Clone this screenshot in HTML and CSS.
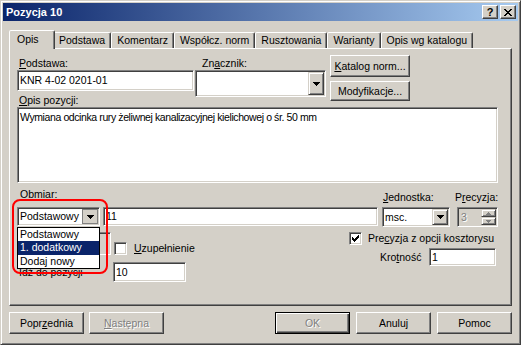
FILE: index.html
```html
<!DOCTYPE html>
<html lang="pl">
<head>
    <meta charset="UTF-8">
    <meta name="viewport" content="width=device-width, initial-scale=1.0">
    <title>Pozycja 10</title>
    <link rel="stylesheet" href="styles.css">
</head>
<body>

<div class="window">
    <div class="titlebar">
        <span class="title">Pozycja 10</span>
        <div class="caption-buttons">
            <span class="cap-btn">?</span>
            <span class="cap-btn">
                <svg width="8" height="7" viewBox="0 0 8 7" shape-rendering="crispEdges"><path d="M0 0h2v1H0zM6 0h2v1H6zM1 1h2v1H1zM5 1h2v1H5zM2 2h4v1H2zM3 3h2v1H3zM2 4h4v1H2zM1 5h2v1H1zM5 5h2v1H5zM0 6h2v1H0zM6 6h2v1H6z"/></svg>
            </span>
        </div>
    </div>

    <div class="dialog">
        <div class="tabs">
            <div class="tab active">Opis</div>
            <div class="tab">Podstawa</div>
            <div class="tab">Komentarz</div>
            <div class="tab">Współcz. norm</div>
            <div class="tab">Rusztowania</div>
            <div class="tab">Warianty</div>
            <div class="tab">Opis wg katalogu</div>
        </div>

        <div class="panel">
            <div class="row-top">
                <div class="col-podstawa">
                    <div class="label"><u>P</u>odstawa:</div>
                    <div class="sunken edit knr">KNR 4-02 0201-01</div>
                </div>
                <div class="col-znacznik">
                    <div class="label">Zn<u>a</u>cznik:</div>
                    <div class="sunken combo znacznik">
                        <span class="combo-value"></span>
                        <span class="combo-btn">
                            <svg width="7" height="4" viewBox="0 0 7 4" shape-rendering="crispEdges"><path d="M0 0h7v1H0zM1 1h5v1H1zM2 2h3v1H2zM3 3h1v1H3z"/></svg>
                        </span>
                    </div>
                </div>
                <div class="col-buttons">
                    <div class="btn katalog"><u>K</u>atalog norm...</div>
                    <div class="btn modyfikacje">Modyfikacje...</div>
                </div>
            </div>

            <div class="label"><u>O</u>pis pozycji:</div>
            <div class="sunken edit memo">Wymiana odcinka rury żeliwnej kanalizacyjnej kielichowej o śr. 50 mm</div>

            <div class="obmiar-labels">
                <div class="label obmiar-label">Obmiar:</div>
                <div class="label jm-label"><u>J</u>ednostka:</div>
                <div class="label precyzja-label">P<u>r</u>ecyzja:</div>
            </div>
            <div class="obmiar-row">
                <div class="sunken combo obmiar-combo">
                    <span class="combo-value">Podstawowy</span>
                    <span class="combo-btn pressed">
                        <svg width="7" height="4" viewBox="0 0 7 4" shape-rendering="crispEdges"><path d="M0 0h7v1H0zM1 1h5v1H1zM2 2h3v1H2zM3 3h1v1H3z"/></svg>
                    </span>
                </div>
                <div class="sunken edit ilosc">11</div>
                <div class="sunken combo jm-combo">
                    <span class="combo-value">msc.</span>
                    <span class="combo-btn">
                        <svg width="7" height="4" viewBox="0 0 7 4" shape-rendering="crispEdges"><path d="M0 0h7v1H0zM1 1h5v1H1zM2 2h3v1H2zM3 3h1v1H3z"/></svg>
                    </span>
                </div>
                <div class="sunken spin">
                    <span class="spin-value">3</span>
                    <span class="spin-btns">
                        <span class="spin-btn">
                            <svg width="5" height="3" viewBox="0 0 5 3" shape-rendering="crispEdges"><path d="M2 0h1v1H2zM1 1h3v1H1zM0 2h5v1H0z"/></svg>
                        </span>
                        <span class="spin-btn">
                            <svg width="5" height="3" viewBox="0 0 5 3" shape-rendering="crispEdges"><path d="M0 0h5v1H0zM1 1h3v1H1zM2 2h1v1H2z"/></svg>
                        </span>
                    </span>
                </div>
            </div>

            <div class="lower">
                <div class="lower-left">
                    <div class="check-row">
                        <div class="sunken hidden-box"></div>
                        <span class="sunken checkbox uzupelnienie"></span>
                        <span class="label check-label"><u>U</u>zupełnienie</span>
                    </div>
                    <div class="goto-row">
                        <span class="label goto-label">Idź do pozycji</span>
                        <div class="sunken edit goto">10</div>
                    </div>
                </div>
                <div class="lower-right">
                    <div class="check-row">
                        <span class="sunken checkbox">
                            <svg width="7" height="7" viewBox="0 0 7 7" shape-rendering="crispEdges"><path d="M6 0h1v1H6zM5 1h2v1H5zM0 2h1v1H0zM4 2h3v1H4zM0 3h2v1H0zM3 3h3v1H3zM0 4h5v1H0zM1 5h3v1H1zM2 6h1v1H2z"/></svg>
                        </span>
                        <span class="label check-label">Pre<u>c</u>yzja z opcji kosztorysu</span>
                    </div>
                    <div class="krotnosc-row">
                        <span class="label krotnosc-label">Kro<u>t</u>ność</span>
                        <div class="sunken edit krotnosc">1</div>
                    </div>
                </div>
            </div>

            <!-- rozwinieta lista obmiarow -->
            <div class="dropdown">
                <div class="dropdown-item">Podstawowy</div>
                <div class="dropdown-item selected">1. dodatkowy</div>
                <div class="dropdown-item">Dodaj nowy</div>
            </div>
            <div class="highlight"></div>
        </div>

        <div class="buttons">
            <div class="btn">Popr<u>z</u>ednia</div>
            <div class="btn disabled next"><u>N</u>astępna</div>
            <div class="btn default disabled ok">OK</div>
            <div class="btn">Anuluj</div>
            <div class="btn">Pomoc</div>
        </div>
    </div>
</div>

</body>
</html>
```

FILE: styles.css
```css
* {
    box-sizing: border-box;
}

body {
    margin: 0;
    font-family: "Liberation Sans", Arial, sans-serif;
    font-size: 10.5px;
    line-height: 13px;
    color: #000;
    background: #d4d0c8;
}

u {
    text-underline-offset: 1px;
}

.window {
    width: 521px;
    height: 345px;
    display: flex;
    flex-direction: column;
    padding: 2px;
    background: #d4d0c8;
    border: 1px solid;
    border-color: #d4d0c8 #404040 #404040 #d4d0c8;
    box-shadow: inset 1px 1px #fff, inset -1px -1px #808080;
}

/* pasek tytulu */
.titlebar {
    height: 18px;
    flex: none;
    display: flex;
    align-items: center;
    padding-left: 3px;
    background: linear-gradient(to right, #0a246a, #a6caf0);
}

.title {
    color: #fff;
    font-size: 11px;
    font-weight: bold;
}

.caption-buttons {
    margin-left: auto;
    margin-right: 2px;
    display: flex;
    gap: 2px;
}

.cap-btn {
    width: 16px;
    height: 14px;
    display: flex;
    align-items: center;
    justify-content: center;
    background: #d4d0c8;
    border: 1px solid;
    border-color: #fff #404040 #404040 #fff;
    box-shadow: inset -1px -1px #808080;
    font-size: 11px;
    font-weight: bold;
}

/* zakladki */
.dialog {
    flex: 1;
    padding: 9px 6px 0;
}

.tabs {
    height: 18px;
    display: flex;
    align-items: flex-end;
    padding-left: 2px;
}

.tab {
    height: 16px;
    padding: 1px 5px 0 5px;
    border: 1px solid;
    border-bottom: none;
    border-color: #fff #404040 transparent #fff;
    border-radius: 2px 2px 0 0;
    box-shadow: inset -1px 0 #808080;
    background: #d4d0c8;
    white-space: nowrap;
}

.tab.active {
    height: 19px;
    min-width: 46px;
    margin: 0 -2px -1px;
    padding: 2px 7px 0;
    position: relative;
    z-index: 1;
}

.panel {
    position: relative;
    height: 258px;
    padding-left: 7px;
    border: 1px solid;
    border-color: #fff #404040 #404040 #fff;
    box-shadow: inset -1px -1px #808080;
}

/* kontrolki */
.label {
    padding-left: 2px;
    white-space: nowrap;
}

.sunken {
    border: 1px solid;
    border-color: #808080 #fff #fff #808080;
    box-shadow: inset 1px 1px #404040, inset -1px -1px #d4d0c8;
    background: #fff;
    padding: 1px;
}

.edit {
    display: flex;
    align-items: center;
    padding-left: 2px;
    white-space: nowrap;
}

.combo {
    display: flex;
}

.combo-value {
    flex: 1;
    display: flex;
    align-items: center;
    padding-left: 1px;
    overflow: hidden;
}

.combo-btn {
    width: 16px;
    display: flex;
    align-items: center;
    justify-content: center;
    background: #d4d0c8;
    border: 1px solid;
    border-color: #d4d0c8 #404040 #404040 #d4d0c8;
    box-shadow: inset 1px 1px #fff, inset -1px -1px #808080;
}

.combo-btn.pressed {
    border-color: #808080;
    box-shadow: none;
    padding: 1px 0 0 1px;
}

.btn {
    height: 22px;
    display: flex;
    align-items: center;
    justify-content: center;
    background: #d4d0c8;
    border: 1px solid;
    border-color: #fff #404040 #404040 #fff;
    box-shadow: inset -1px -1px #808080;
    white-space: nowrap;
}

.btn.disabled {
    color: #808080;
    text-shadow: 1px 1px #fff;
}

.btn.default {
    border-color: #000;
    box-shadow: inset 1px 1px #fff, inset -1px -1px #404040, inset -2px -2px #808080;
}

/* gorny wiersz */
.row-top {
    height: 45px;
    display: flex;
    align-items: flex-start;
}

.col-podstawa {
    width: 177px;
    margin-top: 8px;
}

.knr {
    height: 21px;
}

.col-znacznik {
    width: 131px;
    margin-left: 1px;
    margin-top: 8px;
}

.col-znacznik .label {
    padding-left: 7px;
}

.znacznik {
    height: 27px;
}

.col-buttons {
    width: 80px;
    margin-left: 4px;
    margin-top: 6px;
}

.modyfikacje {
    height: 20px;
    margin-top: 4px;
}

.memo {
    width: 481px;
    height: 76px;
    display: block;
    padding: 3px 1px 1px 2px;
    letter-spacing: -0.4px;
}

/* obmiar */
.obmiar-labels {
    height: 24px;
    display: flex;
    align-items: flex-start;
}

.obmiar-label {
    width: 365px;
    margin-top: 5px;
    padding-left: 3px;
}

.jm-label {
    width: 72px;
    margin-top: 8px;
    padding-left: 1px;
}

.precyzja-label {
    margin-top: 8px;
    padding-left: 1px;
}

.obmiar-row {
    height: 20px;
    display: flex;
    align-items: flex-start;
}

.obmiar-combo {
    width: 83px;
    height: 19px;
}

.ilosc {
    width: 275px;
    height: 19px;
    margin-left: 3px;
}

.jm-combo {
    width: 68px;
    height: 20px;
    margin-left: 4px;
}

.spin {
    width: 41px;
    height: 20px;
    margin-left: 7px;
    display: flex;
    background: #d4d0c8;
}

.spin-value {
    flex: 1;
    display: flex;
    align-items: center;
    padding-left: 2px;
    color: #808080;
    text-shadow: 1px 1px #fff;
}

.spin-btns {
    width: 15px;
    display: flex;
    flex-direction: column;
}

.spin-btn {
    flex: 1;
    display: flex;
    align-items: center;
    justify-content: center;
    border: 1px solid;
    border-color: #d4d0c8 #404040 #404040 #d4d0c8;
    box-shadow: inset 1px 1px #fff, inset -1px -1px #808080;
    fill: #808080;
}

/* dolna czesc */
.lower {
    width: 481px;
    display: flex;
    justify-content: space-between;
}

.lower-left,
.lower-right {
    margin-top: 5px;
}

.lower-right {
    width: 149px;
}

.check-row {
    display: flex;
    align-items: flex-start;
}

.hidden-box {
    width: 94px;
    height: 23px;
    background: #d4d0c8;
}

.checkbox {
    width: 13px;
    height: 13px;
    display: flex;
    align-items: center;
    justify-content: center;
}

.uzupelnienie {
    margin: 10px 0 0 3px;
}

.check-label {
    margin-left: 4px;
}

.uzupelnienie + .check-label {
    margin-top: 10px;
    margin-left: 5px;
}

.goto-row {
    display: flex;
    align-items: center;
    margin-top: 7px;
}

.goto-label {
    width: 96px;
}

.goto {
    width: 73px;
    height: 20px;
}

.krotnosc-row {
    display: flex;
    align-items: center;
    margin-top: 3px;
    padding-left: 29px;
}

.krotnosc-label {
    width: 51px;
}

.krotnosc {
    width: 67px;
    height: 18px;
}

/* rozwinieta lista i zaznaczenie */
.dropdown {
    position: absolute;
    left: 7px;
    top: 178px;
    width: 83px;
    height: 42px;
    background: #fff;
    border: 1px solid #000;
    z-index: 2;
}

.dropdown-item {
    height: 13px;
    padding-left: 2px;
    white-space: nowrap;
}

.dropdown-item.selected {
    height: 14px;
    background: #0a246a;
    color: #fff;
}

.highlight {
    position: absolute;
    left: 2px;
    top: 150px;
    width: 96px;
    height: 75px;
    border: 2px solid #ff0000;
    border-radius: 8px;
    z-index: 3;
}

/* przyciski */
.buttons {
    display: flex;
    margin-top: 6px;
}

.buttons .btn {
    width: 75px;
}

.buttons .next {
    margin-left: 5px;
}

.buttons .ok {
    margin-left: auto;
}

.buttons .ok ~ .btn {
    margin-left: 6px;
}
```
